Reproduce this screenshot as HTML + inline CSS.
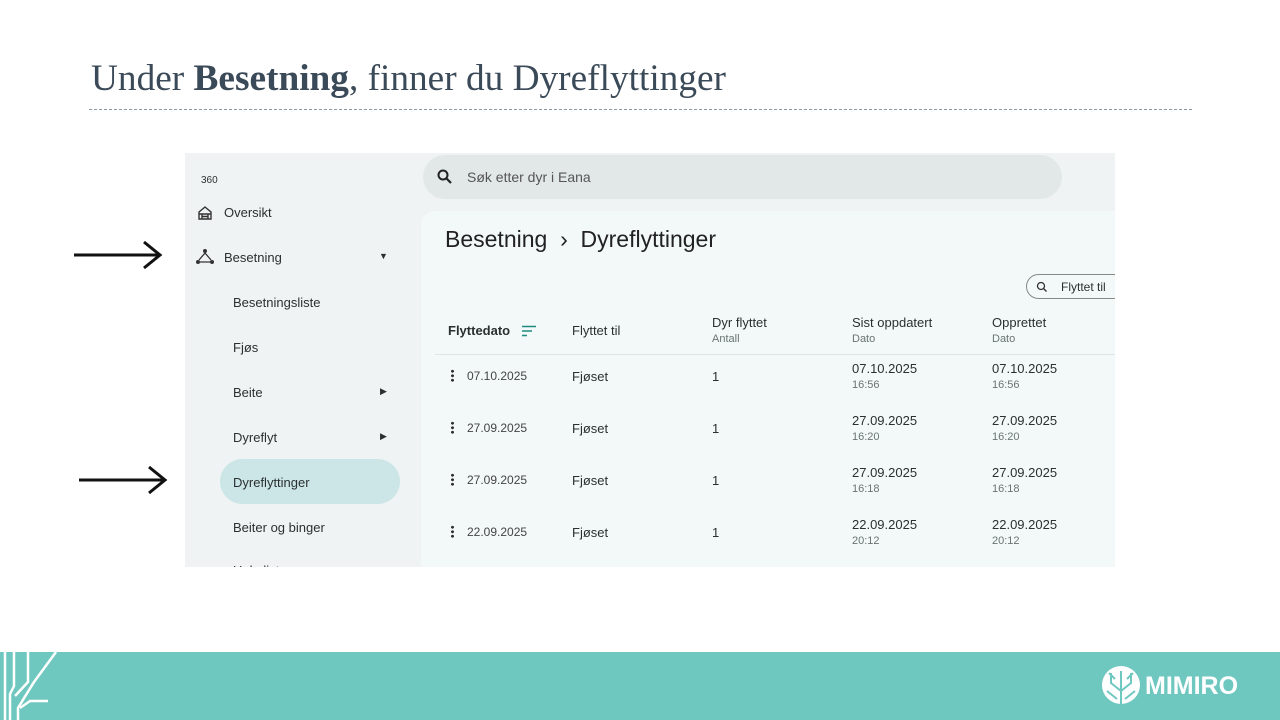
<!DOCTYPE html>
<html><head><meta charset="utf-8"><style>
*{margin:0;padding:0;box-sizing:border-box}
body{width:1280px;height:720px;background:#fff;position:relative;overflow:hidden;font-family:"Liberation Sans",sans-serif}
.abs{position:absolute}
.title{left:91px;top:57px;font-family:"Liberation Serif",serif;font-size:37.3px;color:#3b4a58;white-space:nowrap}
.rule{left:89px;top:109px;width:1103px;border-top:1px dashed #8a9aa0}
.shot{left:185px;top:153px;width:930px;height:414px;background:#eff3f3;overflow:hidden}
.s{position:absolute;font-size:13px;color:#2a3030;white-space:nowrap}
.search{left:238px;top:2px;width:639px;height:44px;border-radius:22px;background:#e2e8e8}
.panel{left:236px;top:58px;width:700px;height:360px;background:#f3f9f9;border-radius:14px 0 0 0}
.sel{left:35px;top:306px;width:180px;height:45px;border-radius:23px;background:#cce5e7}
.hline{position:absolute;left:250px;width:680px;border-top:1px solid #dde5e5}
.g{color:#6a7272;font-size:11px}
.k{position:absolute;left:266px;width:3px;height:13px;background:radial-gradient(circle,#333 1.4px,transparent 1.6px) 0 0/3px 4.5px repeat-y}
.footer{left:0;top:652px;width:1280px;height:68px;background:#6fc8c0}
</style></head><body>
<div class="abs title">Under <b>Besetning</b>, finner du Dyreflyttinger</div>
<div class="abs rule"></div>

<svg class="abs" style="left:72px;top:238px" width="92" height="34"><path d="M2 17H86" stroke="#111" stroke-width="3"/><path d="M72 4L88 17L72 30" stroke="#111" stroke-width="3" fill="none"/></svg>
<svg class="abs" style="left:77px;top:463px" width="92" height="34"><path d="M2 17H86" stroke="#111" stroke-width="3"/><path d="M72 4L88 17L72 30" stroke="#111" stroke-width="3" fill="none"/></svg>

<div class="abs shot">
  <div class="abs search"></div>
  <svg class="abs" style="left:252px;top:16px" width="16" height="16"><circle cx="6" cy="6" r="4.5" stroke="#222" stroke-width="2" fill="none"/><path d="M9.5 9.5L14 14" stroke="#222" stroke-width="2.2"/></svg>
  <div class="s" style="left:282px;top:16px;color:#555;font-size:14px">Søk etter dyr i Eana</div>
  <div class="abs panel"></div>
  <div class="abs sel"></div>
  <div class="s" style="left:16px;top:22px;font-size:10px">360</div>
  <svg class="abs" style="left:12px;top:52px" width="16" height="16"><path d="M2 7L8 2L14 7V14H2Z M2 9H14 M5 9V14 M11 9V14 M5 11.5H11" stroke="#333" stroke-width="1.4" fill="none"/></svg>
  <div class="s" style="left:39px;top:52px">Oversikt</div>
  <svg class="abs" style="left:10px;top:95px" width="20" height="18"><circle cx="10" cy="3" r="2" fill="#333"/><circle cx="3" cy="14" r="2" fill="#333"/><circle cx="17" cy="14" r="2" fill="#333"/><path d="M10 5L4 12 M10 5L16 12 M5 14H15" stroke="#333" stroke-width="1.3" fill="none"/></svg>
  <div class="s" style="left:39px;top:97px">Besetning</div>
  <div class="s" style="left:194px;top:98px;font-size:9px">▼</div>
  <div class="s" style="left:48px;top:142px">Besetningsliste</div>
  <div class="s" style="left:48px;top:187px">Fjøs</div>
  <div class="s" style="left:48px;top:232px">Beite</div>
  <div class="s" style="left:195px;top:233px;font-size:9px">▶</div>
  <div class="s" style="left:48px;top:277px">Dyreflyt</div>
  <div class="s" style="left:195px;top:278px;font-size:9px">▶</div>
  <div class="s" style="left:48px;top:322px">Dyreflyttinger</div>
  <div class="s" style="left:48px;top:367px">Beiter og binger</div>
  <div class="s" style="left:48px;top:410px">Hele lista</div>

  <div class="s" style="left:260px;top:73px;font-size:23px;color:#222">Besetning &nbsp;›&nbsp; Dyreflyttinger</div>
  <div class="abs" style="left:841px;top:121px;width:100px;height:25px;border:1px solid #888;border-radius:13px"></div>
  <svg class="abs" style="left:851px;top:128px" width="12" height="12"><circle cx="5" cy="5" r="3.5" stroke="#333" stroke-width="1.3" fill="none"/><path d="M7.5 7.5L10.5 10.5" stroke="#333" stroke-width="1.4"/></svg>
  <div class="s" style="left:876px;top:127px;font-size:12px">Flyttet til</div>

  <div class="s" style="left:263px;top:170px;font-weight:bold">Flyttedato</div>
  <svg class="abs" style="left:336px;top:172px" width="16" height="12"><path d="M1 1.5H15 M1 6H11 M1 10.5H6" stroke="#1f8a80" stroke-width="1.6"/></svg>
  <div class="s" style="left:387px;top:170px">Flyttet til</div>
  <div class="s" style="left:527px;top:162px">Dyr flyttet</div><div class="s g" style="left:527px;top:180px">Antall</div>
  <div class="s" style="left:667px;top:162px">Sist oppdatert</div><div class="s g" style="left:667px;top:180px">Dato</div>
  <div class="s" style="left:807px;top:162px">Opprettet</div><div class="s g" style="left:807px;top:180px">Dato</div>
  <div class="hline" style="top:201px"></div>

  <div class="k" style="top:216px"></div>
  <div class="s" style="left:282px;top:216px;font-size:12px;color:#444">07.10.2025</div>
  <div class="s" style="left:387px;top:216px">Fjøset</div><div class="s" style="left:527px;top:216px">1</div>
  <div class="s" style="left:667px;top:208px">07.10.2025</div><div class="s g" style="left:667px;top:226px">16:56</div>
  <div class="s" style="left:807px;top:208px">07.10.2025</div><div class="s g" style="left:807px;top:226px">16:56</div>

  <div class="k" style="top:268px"></div>
  <div class="s" style="left:282px;top:268px;font-size:12px;color:#444">27.09.2025</div>
  <div class="s" style="left:387px;top:268px">Fjøset</div><div class="s" style="left:527px;top:268px">1</div>
  <div class="s" style="left:667px;top:260px">27.09.2025</div><div class="s g" style="left:667px;top:278px">16:20</div>
  <div class="s" style="left:807px;top:260px">27.09.2025</div><div class="s g" style="left:807px;top:278px">16:20</div>

  <div class="k" style="top:320px"></div>
  <div class="s" style="left:282px;top:320px;font-size:12px;color:#444">27.09.2025</div>
  <div class="s" style="left:387px;top:320px">Fjøset</div><div class="s" style="left:527px;top:320px">1</div>
  <div class="s" style="left:667px;top:312px">27.09.2025</div><div class="s g" style="left:667px;top:330px">16:18</div>
  <div class="s" style="left:807px;top:312px">27.09.2025</div><div class="s g" style="left:807px;top:330px">16:18</div>

  <div class="k" style="top:372px"></div>
  <div class="s" style="left:282px;top:372px;font-size:12px;color:#444">22.09.2025</div>
  <div class="s" style="left:387px;top:372px">Fjøset</div><div class="s" style="left:527px;top:372px">1</div>
  <div class="s" style="left:667px;top:364px">22.09.2025</div><div class="s g" style="left:667px;top:382px">20:12</div>
  <div class="s" style="left:807px;top:364px">22.09.2025</div><div class="s g" style="left:807px;top:382px">20:12</div>
</div>

<div class="abs footer"></div>
<svg class="abs" style="left:0;top:652px" width="70" height="68"><g stroke="#fff" stroke-width="2.5" fill="none"><path d="M5 0V68"/><path d="M14 0V34L10 42V68"/><path d="M28 0V30L15 44"/><path d="M56 0L34 30L18 56V68"/><path d="M20 56L30 49H48"/></g></svg>
<svg class="abs" style="left:1101px;top:665px" width="40" height="40"><circle cx="20" cy="20" r="19" fill="#fff"/><g stroke="#6fc8c0" stroke-width="2" fill="none"><path d="M20 39V6 M20 26L10 18V8 M20 26L30 18V8 M24 34L34 26 M16 34L6 26 M14 14L8 8 M26 14L32 8"/></g></svg>
<div class="abs" style="left:1145px;top:672px;font-size:25px;font-weight:bold;color:#fff">MIMIRO</div>
</body></html>
